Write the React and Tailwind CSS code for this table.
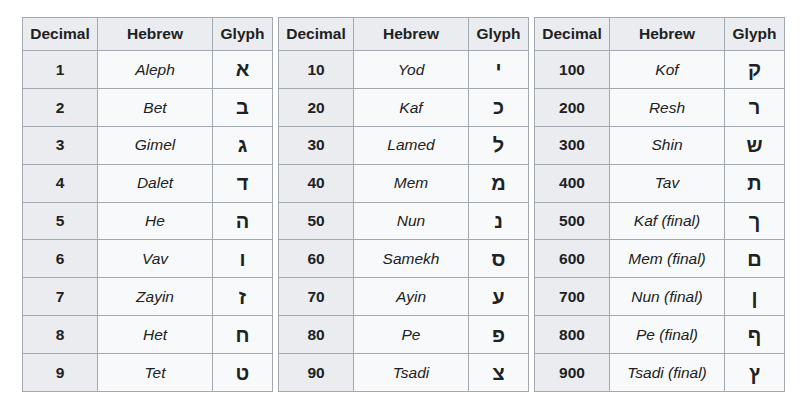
import React from "react";

const tables = [
  [
    ["1", "Aleph", "א"],
    ["2", "Bet", "ב"],
    ["3", "Gimel", "ג"],
    ["4", "Dalet", "ד"],
    ["5", "He", "ה"],
    ["6", "Vav", "ו"],
    ["7", "Zayin", "ז"],
    ["8", "Het", "ח"],
    ["9", "Tet", "ט"],
  ],
  [
    ["10", "Yod", "י"],
    ["20", "Kaf", "כ"],
    ["30", "Lamed", "ל"],
    ["40", "Mem", "מ"],
    ["50", "Nun", "נ"],
    ["60", "Samekh", "ס"],
    ["70", "Ayin", "ע"],
    ["80", "Pe", "פ"],
    ["90", "Tsadi", "צ"],
  ],
  [
    ["100", "Kof", "ק"],
    ["200", "Resh", "ר"],
    ["300", "Shin", "ש"],
    ["400", "Tav", "ת"],
    ["500", "Kaf (final)", "ך"],
    ["600", "Mem (final)", "ם"],
    ["700", "Nun (final)", "ן"],
    ["800", "Pe (final)", "ף"],
    ["900", "Tsadi (final)", "ץ"],
  ],
];

function NumTable({ rows }) {
  return (
    <table className="border-collapse w-[250px] table-fixed text-[#202122] leading-none">
      <colgroup>
        <col className="w-[75px]" />
        <col className="w-[115px]" />
        <col className="w-[60px]" />
      </colgroup>
      <thead>
        <tr className="h-[33px]">
          <th className="border border-[#a2a9b1] bg-[#eaecf0] font-bold text-[15.5px] p-0">Decimal</th>
          <th className="border border-[#a2a9b1] bg-[#eaecf0] font-bold text-[15.5px] p-0">Hebrew</th>
          <th className="border border-[#a2a9b1] bg-[#eaecf0] font-bold text-[15.5px] p-0">Glyph</th>
        </tr>
      </thead>
      <tbody>
        {rows.map((r) => (
          <tr key={r[0]} className="h-[37.9px]">
            <td className="border border-[#a2a9b1] bg-[#eaecf0] font-bold text-[15.5px] text-center p-0">{r[0]}</td>
            <td className="border border-[#a2a9b1] bg-[#f8f9fa] italic text-[15.5px] text-center p-0">{r[1]}</td>
            <td className="border border-[#a2a9b1] bg-[#f8f9fa] font-bold text-[20px] text-center p-0">{r[2]}</td>
          </tr>
        ))}
      </tbody>
    </table>
  );
}

export default function App() {
  return (
    <div className="w-[800px] h-[411px] bg-white pt-[17px] pl-[22px] flex items-start gap-[5px] font-['Liberation_Sans',Arial,sans-serif]">
      {tables.map((t, i) => (
        <NumTable key={i} rows={t} />
      ))}
    </div>
  );
}
